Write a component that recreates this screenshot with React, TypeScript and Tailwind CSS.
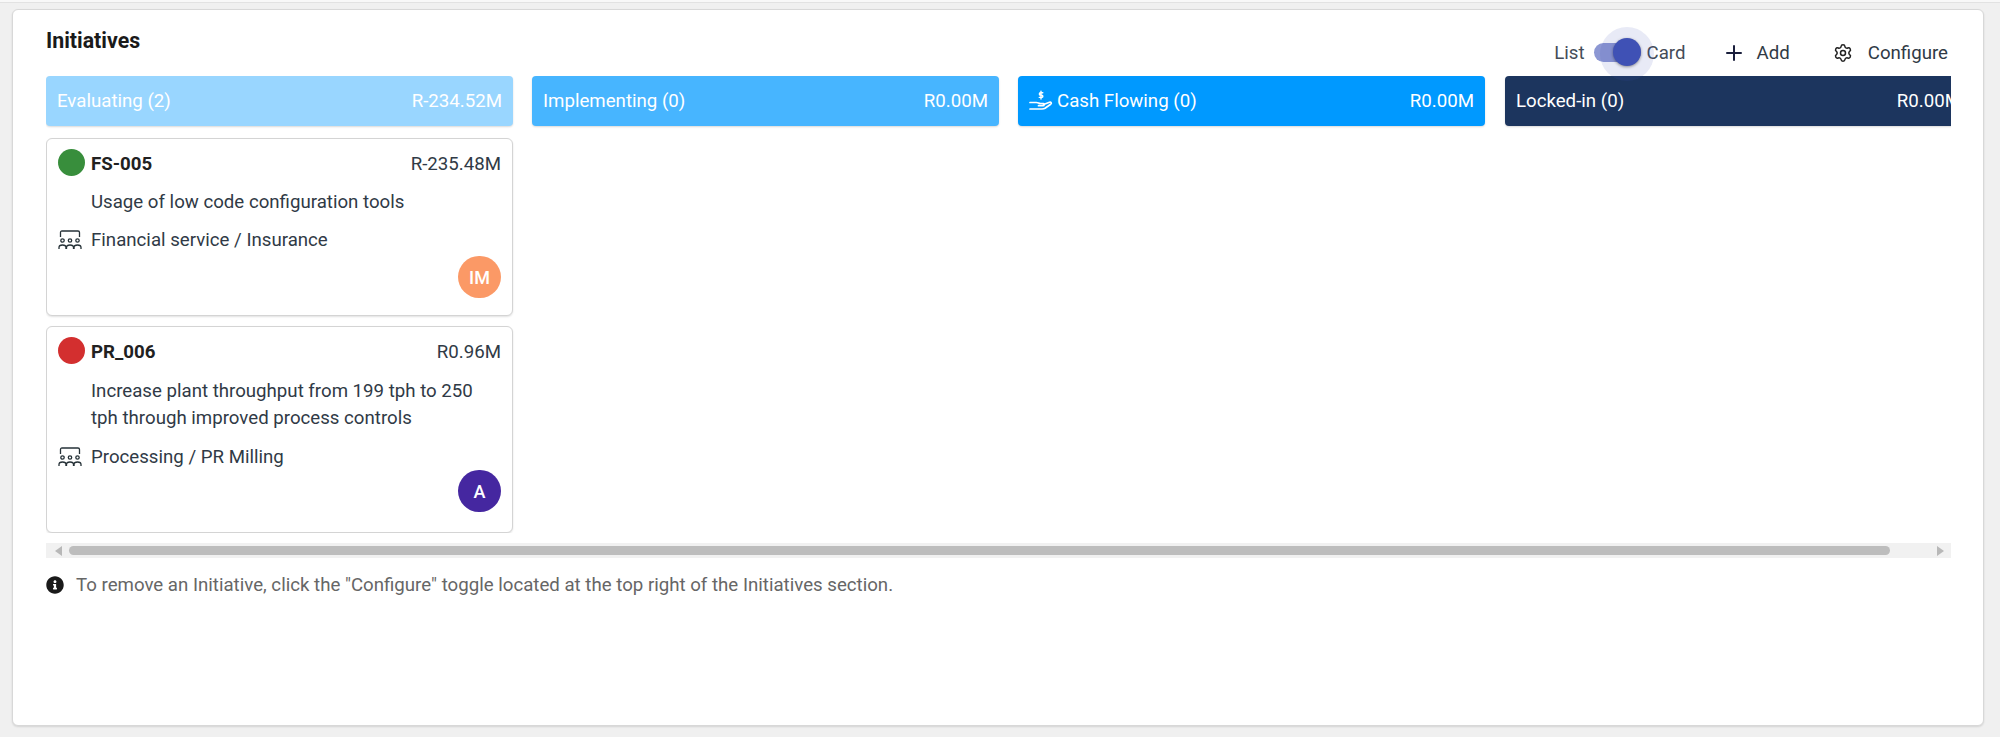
import { Plus, Settings } from 'lucide-react';
import { FaInfoCircle } from 'react-icons/fa';

interface Initiative {
  code: string;
  value: string;
  status: string;
  title: string[];
  group: string;
  initials: string;
  avatar: string;
  height: string;
  titleGap: string;
  groupGap: string;
  avatarGap: string;
}

const initiatives: Initiative[] = [
  {
    code: 'FS-005',
    value: 'R-235.48M',
    status: 'bg-[#388e3c]',
    title: ['Usage of low code configuration tools'],
    group: 'Financial service / Insurance',
    initials: 'IM',
    avatar: 'bg-[#fb9966]',
    height: 'h-[178px]',
    titleGap: 'mt-[13px]',
    groupGap: 'mt-[10px]',
    avatarGap: 'mt-[3px]',
  },
  {
    code: 'PR_006',
    value: 'R0.96M',
    status: 'bg-[#d32f2f]',
    title: ['Increase plant throughput from 199 tph to 250', 'tph through improved process controls'],
    group: 'Processing / PR Milling',
    initials: 'A',
    avatar: 'bg-[#4527a0]',
    height: 'h-[207px]',
    titleGap: 'mt-[14px]',
    groupGap: 'mt-[11px]',
    avatarGap: 'mt-0',
  },
];

function GroupIcon() {
  return (
    <svg width="24" height="20" viewBox="0 0 24 20" fill="none" stroke="#263238" strokeWidth="1.3" className="shrink-0">
      <path d="M2.500 7V2.500C2.500 1.600 3.100 1 4 1h16c.9 0 1.500.6 1.500 1.500V7" />
      <circle cx="4.500" cy="10.500" r="1.700" />
      <circle cx="12" cy="10.500" r="1.700" />
      <circle cx="19.500" cy="10.500" r="1.700" />
      <path d="M1 19v-1.500c0-1.600 1.500-2.500 3.500-2.500S8 15.900 8 17.500V19" />
      <path d="M8.500 19v-1.500c0-1.600 1.500-2.500 3.500-2.500s3.500.9 3.500 2.500V19" />
      <path d="M16 19v-1.500c0-1.600 1.500-2.500 3.500-2.500s3.500.9 3.500 2.500V19" />
    </svg>
  );
}

function CashIcon() {
  return (
    <svg width="24" height="22" viewBox="0 0 24 22" fill="none" stroke="#fff" strokeWidth="1.7" strokeLinecap="round" strokeLinejoin="round">
      <path d="M13.800 2.800h-2.300a1 1 0 0 0 0 2.300h1.200a1 1 0 0 1 0 2.300h-2.400M12 1.200v7.800" strokeWidth="1.400" />
      <path d="M1 12.500h6.500c1.500 0 2.500 1 4 1h3c1 0 1 2.200-.5 2.200H9.500" />
      <path d="M14.500 14.500l6-2.300c1.500-.5 2.500 1 1.200 2L16 18.300c-1 .6-1.800.7-3 .7H1" />
    </svg>
  );
}

function StageBar({ label, value, color, icon }: { label: string; value: string; color: string; icon?: boolean }) {
  return (
    <div className={`flex h-[50px] items-center justify-between rounded-[4px] px-[11px] text-[18.67px] text-white shadow-[0_1px_2px_rgba(0,0,0,0.15)] ${color}`}>
      <span className="flex items-center gap-[4px]">
        {icon && <CashIcon />}
        {label}
      </span>
      <span>{value}</span>
    </div>
  );
}

function InitiativeCard({ item }: { item: Initiative }) {
  return (
    <div className={`flex flex-col rounded-[6px] border border-[#d4d4d4] bg-white pl-[11px] pr-[11px] pt-[9px] shadow-[0_1px_2px_rgba(0,0,0,0.12)] ${item.height}`}>
      <div className="flex h-[28px] items-center justify-between">
        <div className="flex items-center gap-[6px]">
          <span className={`h-[27px] w-[27px] rounded-full ${item.status}`} />
          <span className="pt-[3px] text-[18.67px] font-bold text-[#212121]">{item.code}</span>
        </div>
        <span className="pt-[3px] text-[18.67px] text-[#303a46]">{item.value}</span>
      </div>
      <div className={`pl-[33px] text-[18.67px] leading-[27px] text-[#303a46] ${item.titleGap}`}>
        {item.title.map((line) => (
          <div key={line}>{line}</div>
        ))}
      </div>
      <div className={`flex h-[27px] items-center gap-[9px] text-[18.67px] text-[#303a46] ${item.groupGap}`}>
        <GroupIcon />
        {item.group}
      </div>
      <div className={`flex justify-end ${item.avatarGap}`}>
        <span className={`flex h-[42px] w-[43px] items-center justify-center rounded-full text-[18px] font-medium text-white ${item.avatar}`}>
          {item.initials}
        </span>
      </div>
    </div>
  );
}

function ScrollBar() {
  return (
    <div className="mt-[10px] flex h-[15px] w-[1905px] items-center bg-[#f1f1f1] pl-[9px] pr-[7px]">
      <span className="h-0 w-0 border-y-[5px] border-r-[7px] border-y-transparent border-r-[#b8b8b8]" />
      <span className="ml-[7px] h-[9px] w-[1821px] rounded-full bg-[#bdbdbd]" />
      <span className="ml-auto h-0 w-0 border-y-[5px] border-l-[7px] border-y-transparent border-l-[#b8b8b8]" />
    </div>
  );
}

export default function App() {
  return (
    <div className="h-[737px] w-[2000px] overflow-hidden bg-[#f0f0f0] font-['Roboto',sans-serif]">
      <div className="h-[3px] border-b border-[#e2e2e2] bg-[#f8f8f8]" />
      <div className="ml-[12px] mt-[6px] h-[717px] w-[1972px] rounded-[6px] border border-[#d8d8d8] bg-white pl-[33px] shadow-[0_1px_2px_rgba(0,0,0,0.12)]">
        <div className="flex h-[66px] w-[1905px] justify-between">
          <h2 className="pt-[17px] text-[21.33px] font-bold leading-[27px] text-[#1a1a1a]">Initiatives</h2>
          <div className="flex h-[66px] items-center pb-[1px] pr-[3px] pt-[20px] text-[18.67px] text-[#444c58]">
            <span>List</span>
            <div className="relative ml-[9px] h-[19px] w-[47px] rounded-full bg-[#3f51b5]/60">
              <span className="absolute left-[6px] top-[-16px] h-[54px] w-[54px] rounded-full bg-[#3f51b5]/12" />
              <span className="absolute left-[19px] top-[-5px] h-[28px] w-[28px] rounded-full bg-[#3f51b5] shadow-[0_1px_3px_rgba(0,0,0,0.4)]" />
            </div>
            <span className="ml-[6px]">Card</span>
            <Plus size={24} strokeWidth={2} className="ml-[36px] text-[#1a1f3c]" />
            <span className="ml-[11px] text-[#303a46]">Add</span>
            <Settings size={20} strokeWidth={1.8} className="ml-[43px] text-[#222]" />
            <span className="ml-[15px] text-[#303a46]">Configure</span>
          </div>
        </div>

        <div className="flex h-[457px] w-[1905px] gap-[19px] overflow-hidden">
          <div className="w-[467px] shrink-0">
            <StageBar label="Evaluating (2)" value="R-234.52M" color="bg-[#99d6ff]" />
            <div className="mt-[12px] flex flex-col gap-[10px]">
              {initiatives.map((item) => (
                <InitiativeCard key={item.code} item={item} />
              ))}
            </div>
          </div>
          <div className="w-[467px] shrink-0">
            <StageBar label="Implementing (0)" value="R0.00M" color="bg-[#47b5ff]" />
          </div>
          <div className="w-[467px] shrink-0">
            <StageBar label="Cash Flowing (0)" value="R0.00M" color="bg-[#0099ff]" icon />
          </div>
          <div className="ml-[1px] w-[467px] shrink-0">
            <StageBar label="Locked-in (0)" value="R0.00M" color="bg-[#1c355e]" />
          </div>
        </div>

        <ScrollBar />

        <div className="mt-[13px] flex items-center gap-[12px] text-[18.67px] text-[#666]">
          <FaInfoCircle size={18} className="text-[#1a1a1a]" />
          <span>To remove an Initiative, click the "Configure" toggle located at the top right of the Initiatives section.</span>
        </div>
      </div>
    </div>
  );
}
